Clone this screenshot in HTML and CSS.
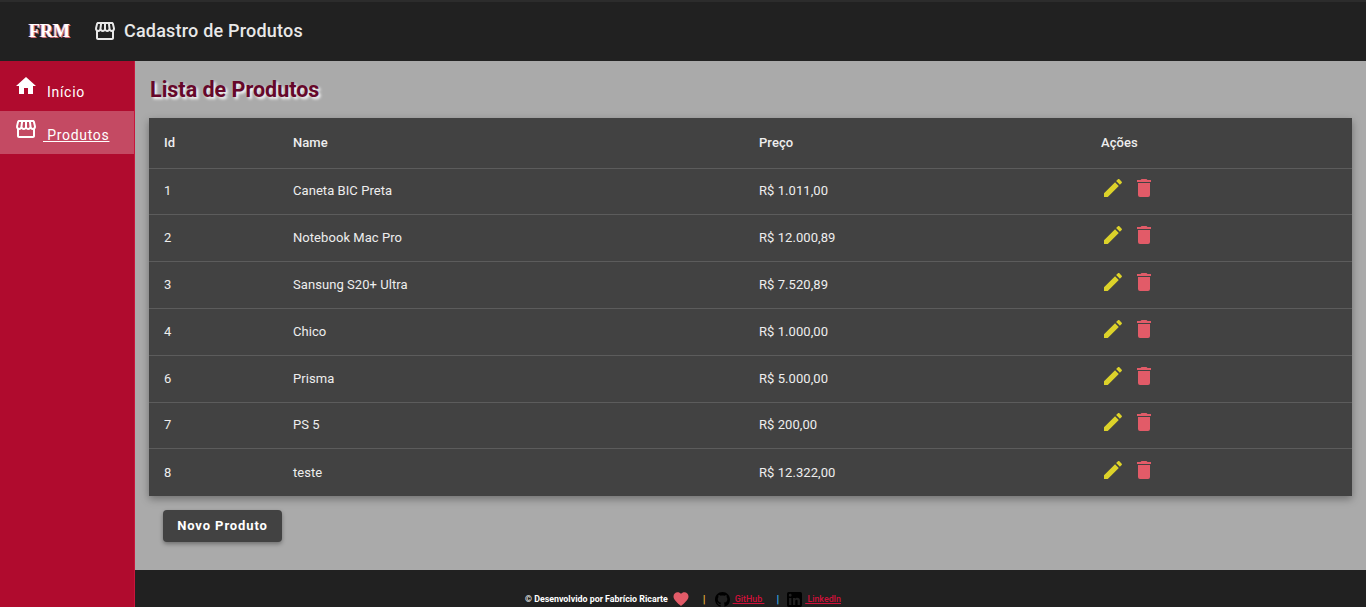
FILE: index.html
```html
<!DOCTYPE html>
<html lang="pt-BR">
<head>
  <meta charset="UTF-8" />
  <title>Cadastro de Produtos</title>
  <link rel="stylesheet" href="styles.css">
</head>
<body>
  <svg class="sprites" width="0" height="0">
    <symbol id="i-store" viewBox="0 0 24 24"><path d="M21.9 8.89l-1.05-4.37c-.22-.9-1-1.52-1.91-1.52H5.05c-.9 0-1.69.63-1.9 1.52L2.1 8.89c-.24 1.02-.02 2.06.62 2.88.08.11.19.19.28.29V19c0 1.1.9 2 2 2h14c1.1 0 2-.9 2-2v-6.94c.09-.09.2-.18.28-.28.64-.82.87-1.87.62-2.89zm-2.99-3.9l1.05 4.37c.1.42.01.84-.25 1.17-.14.18-.44.47-.94.47-.61 0-1.14-.49-1.21-1.14L16.98 5l1.93-.01zM13 5h1.96l.54 4.52c.05.39-.07.78-.33 1.07-.22.26-.54.41-.95.41-.67 0-1.22-.59-1.22-1.31V5zM8.49 9.52L9.04 5H11v4.69c0 .72-.55 1.31-1.29 1.31-.34 0-.65-.15-.89-.41-.25-.29-.37-.68-.33-1.07zm-4.45-.16L5.05 5h1.97l-.58 4.86c-.08.65-.6 1.14-1.21 1.14-.49 0-.8-.29-.93-.47-.27-.32-.36-.75-.26-1.17zM5 19v-6.03c.08.01.15.03.23.03.87 0 1.66-.36 2.24-.95.6.6 1.4.95 2.31.95.87 0 1.65-.36 2.23-.93.59.57 1.39.93 2.29.93.84 0 1.64-.35 2.24-.95.58.59 1.37.95 2.24.95.08 0 .15-.02.23-.03V19H5z"/></symbol>
    <symbol id="i-home" viewBox="0 0 24 24"><path d="M10 20v-6h4v6h5v-8h3L12 3 2 12h3v8z"/></symbol>
    <symbol id="i-pencil" viewBox="0 0 24 24"><path d="M20.71,7.04C21.1,6.65 21.1,6 20.71,5.63L18.37,3.29C18,2.9 17.35,2.9 16.96,3.29L15.12,5.12L18.87,8.87M3,17.25V21H6.75L17.81,9.93L14.06,6.18L3,17.25Z"/></symbol>
    <symbol id="i-delete" viewBox="0 0 24 24"><path d="M19,4H15.5L14.5,3H9.5L8.5,4H5V6H19M6,19A2,2 0 0,0 8,21H16A2,2 0 0,0 18,19V7H6V19Z"/></symbol>
  </svg>

  <header class="topbar">
    <span class="logo">FRM</span>
    <svg class="icon topbar-icon"><use href="#i-store"/></svg>
    <span class="topbar-title">Cadastro de Produtos</span>
  </header>

  <div class="main-wrap">
    <nav class="sidebar">
      <a class="nav-item">
        <svg class="icon"><use href="#i-home"/></svg>
        <span class="nav-label">Início</span>
      </a>
      <a class="nav-item active">
        <svg class="icon"><use href="#i-store"/></svg>
        <span class="nav-label">&nbsp;Produtos</span>
      </a>
    </nav>

    <div class="content-col">
      <main class="content">
        <h1 class="page-title">Lista de Produtos</h1>

        <table class="products">
          <thead>
            <tr><th class="col-id">Id</th><th class="col-name">Name</th><th class="col-price">Preço</th><th>Ações</th></tr>
          </thead>
          <tbody id="rows">
            <tr class="row-short">
              <td>1</td><td>Caneta BIC Preta</td><td>R$ 1.011,00</td>
              <td><span class="actions"><svg class="icon edit"><use href="#i-pencil"/></svg><svg class="icon remove"><use href="#i-delete"/></svg></span></td>
            </tr>
            <tr>
              <td>2</td><td>Notebook Mac Pro</td><td>R$ 12.000,89</td>
              <td><span class="actions"><svg class="icon edit"><use href="#i-pencil"/></svg><svg class="icon remove"><use href="#i-delete"/></svg></span></td>
            </tr>
            <tr>
              <td>3</td><td>Sansung S20+ Ultra</td><td>R$ 7.520,89</td>
              <td><span class="actions"><svg class="icon edit"><use href="#i-pencil"/></svg><svg class="icon remove"><use href="#i-delete"/></svg></span></td>
            </tr>
            <tr>
              <td>4</td><td>Chico</td><td>R$ 1.000,00</td>
              <td><span class="actions"><svg class="icon edit"><use href="#i-pencil"/></svg><svg class="icon remove"><use href="#i-delete"/></svg></span></td>
            </tr>
            <tr>
              <td>6</td><td>Prisma</td><td>R$ 5.000,00</td>
              <td><span class="actions"><svg class="icon edit"><use href="#i-pencil"/></svg><svg class="icon remove"><use href="#i-delete"/></svg></span></td>
            </tr>
            <tr class="row-short">
              <td>7</td><td>PS 5</td><td>R$ 200,00</td>
              <td><span class="actions"><svg class="icon edit"><use href="#i-pencil"/></svg><svg class="icon remove"><use href="#i-delete"/></svg></span></td>
            </tr>
            <tr class="row-tall">
              <td>8</td><td>teste</td><td>R$ 12.322,00</td>
              <td><span class="actions"><svg class="icon edit"><use href="#i-pencil"/></svg><svg class="icon remove"><use href="#i-delete"/></svg></span></td>
            </tr>
          </tbody>
        </table>

        <button class="btn-new">Novo Produto</button>
      </main>

      <footer class="footer">
        <span class="credit">© Desenvolvido por Fabrício Ricarte</span>
        <svg class="icon heart" viewBox="0 0 24 24"><path d="M12,21.35L10.55,20.03C5.4,15.36 2,12.27 2,8.5C2,5.41 4.42,3 7.5,3C9.24,3 10.91,3.81 12,5.08C13.09,3.81 14.76,3 16.5,3C19.58,3 22,5.41 22,8.5C22,12.27 18.6,15.36 13.45,20.03L12,21.35Z"/></svg>
        <span class="sep sep-gold">|</span>
        <svg class="icon social" viewBox="0 0 16 16"><path d="M8 0C3.58 0 0 3.58 0 8c0 3.54 2.29 6.53 5.47 7.59.4.07.55-.17.55-.38 0-.19-.01-.82-.01-1.49-2.01.37-2.53-.49-2.69-.94-.09-.23-.48-.94-.82-1.13-.28-.15-.68-.52-.01-.53.63-.01 1.08.58 1.23.82.72 1.21 1.87.87 2.33.66.07-.52.28-.87.51-1.07-1.78-.2-3.64-.89-3.64-3.95 0-.87.31-1.59.82-2.15-.08-.2-.36-1.02.08-2.12 0 0 .67-.21 2.2.82.64-.18 1.32-.27 2-.27.68 0 1.36.09 2 .27 1.53-1.04 2.2-.82 2.2-.82.44 1.1.16 1.92.08 2.12.51.56.82 1.27.82 2.15 0 3.07-1.87 3.75-3.65 3.95.29.25.54.73.54 1.48 0 1.07-.01 1.93-.01 2.2 0 .21.15.46.55.38A8.013 8.013 0 0016 8c0-4.42-3.58-8-8-8z"/></svg>
        <a class="social-link">&nbsp;GitHub&nbsp;</a>
        <span class="sep sep-blue">|</span>
        <svg class="icon social linkedin" viewBox="3 3 18 18"><path d="M19 3A2 2 0 0 1 21 5V19A2 2 0 0 1 19 21H5A2 2 0 0 1 3 19V5A2 2 0 0 1 5 3H19M18.5 18.5V13.2A3.26 3.26 0 0 0 15.24 9.94C14.39 9.94 13.4 10.46 12.92 11.24V10.13H10.13V18.5H12.92V13.57C12.92 12.8 13.54 12.17 14.31 12.17A1.4 1.4 0 0 1 15.71 13.57V18.5H18.5M6.88 8.56A1.68 1.68 0 0 0 8.56 6.88C8.56 5.95 7.81 5.19 6.88 5.19A1.69 1.69 0 0 0 5.19 6.88C5.19 7.81 5.95 8.56 6.88 8.56M8.27 18.5V10.13H5.5V18.5H8.27Z"/></svg>
        <a class="social-link">&nbsp;LinkedIn</a>
      </footer>
    </div>
  </div>
</body>
</html>
```

FILE: styles.css
```css
* {
  box-sizing: border-box;
}
html, body {
  height: 100%;
}
body {
  margin: 0;
  overflow: hidden;
  display: flex;
  flex-direction: column;
  font-family: Roboto, "Liberation Sans", sans-serif;
  background: #aaaaaa;
}
.sprites {
  position: absolute;
}
.icon {
  display: block;
  width: 24px;
  height: 24px;
  fill: currentColor;
  flex: none;
}

/* top bar */
.topbar {
  height: 61px;
  flex: none;
  display: flex;
  align-items: center;
  padding-left: 29px;
  background: #212121;
  border-top: 2px solid #2c2c2c;
  color: #e8e8e8;
}
.logo {
  width: 64px;
  font-family: "Liberation Serif", serif;
  font-size: 18px;
  font-weight: bold;
  color: #fff;
  text-shadow: 1px 1px 0 #d0707f, -1px 0 0 #e09aa8;
}
.topbar-icon {
  margin-right: 7px;
  margin-top: -2px;
}
.topbar-title {
  font-size: 18px;
  font-weight: 500;
  letter-spacing: 0.2px;
  margin-top: -2px;
}

.main-wrap {
  flex: 1;
  display: flex;
  min-height: 0;
}

/* sidebar */
.sidebar {
  width: 135px;
  flex: none;
  padding-top: 6px;
  background: #b00b2e;
  border-right: 1px solid #c8163c;
}
.nav-item {
  display: flex;
  height: 44px;
  padding: 7px 0 0 14px;
  color: #fff;
}
.nav-item.active {
  height: 43px;
  padding-top: 6px;
  background: #c44a63;
}
.nav-label {
  margin: 8px 0 0 9px;
  font-size: 14px;
  line-height: 20px;
  letter-spacing: 0.7px;
  height: 21px;
}
.nav-item.active .nav-label {
  margin-left: 5px;
  margin-top: 8px;
  text-decoration: underline;
}

/* content */
.content-col {
  flex: 1;
  min-width: 0;
  display: flex;
  flex-direction: column;
}
.content {
  flex: 1;
  padding: 14px 14px 0 14px;
}
.page-title {
  margin: 0 0 13px;
  height: 30px;
  padding-left: 1px;
  font-size: 21.5px;
  line-height: 30px;
  font-weight: 700;
  color: #66072a;
  text-shadow: 2px 2px 3px #ffffff;
}
.products {
  width: 100%;
  border-collapse: collapse;
  table-layout: fixed;
  background: #424242;
  color: #eeeeee;
  font-size: 13px;
  letter-spacing: 0.06px;
  box-shadow: 0 3px 8px rgba(0, 0, 0, 0.35);
}
.products th {
  height: 50px;
  padding: 0 0 0 15px;
  text-align: left;
  font-weight: 500;
}
.products td {
  height: 47px;
  padding: 0 0 0 15px;
  border-top: 1px solid #5c5c5c;
}
.products .row-short td {
  height: 46px;
  padding-bottom: 2px;
}
.products .row-tall td {
  height: 48px;
}
.col-id {
  width: 129px;
}
.col-name {
  width: 466px;
}
.col-price {
  width: 342px;
}
.actions {
  display: flex;
  gap: 7px;
  margin: -5px 0 0 0;
}
.edit {
  color: #dcd22a;
}
.remove {
  color: #e25b68;
}
.btn-new {
  display: block;
  margin: 14px 0 0 14px;
  width: 119px;
  height: 32px;
  padding: 0 0 2px;
  border: 0;
  border-radius: 4px;
  background: #424242;
  color: #fff;
  font-family: inherit;
  font-size: 13px;
  font-weight: 700;
  letter-spacing: 0.9px;
  box-shadow: 0 2px 4px rgba(0, 0, 0, 0.35);
}

/* footer */
.footer {
  height: 37px;
  flex: none;
  display: flex;
  align-items: center;
  padding: 21px 0 0 390px;
  background: #212121;
  font-size: 8.85px;
}
.credit {
  color: #fff;
  font-weight: 700;
}
.heart {
  width: 18px;
  height: 18px;
  margin-left: 4px;
  color: #e25b68;
}
.sep {
  font-weight: 700;
  font-size: 11px;
}
.sep-gold {
  margin: 0 9px 0 13px;
  color: #e8b23a;
}
.sep-blue {
  margin: 0 8px 0 12px;
  color: #35b4ee;
}
.social {
  width: 15px;
  height: 15px;
  color: #000;
}
.social-link {
  margin-left: 3px;
  color: #d0103a;
  font-weight: 500;
  text-decoration: underline;
}
```
